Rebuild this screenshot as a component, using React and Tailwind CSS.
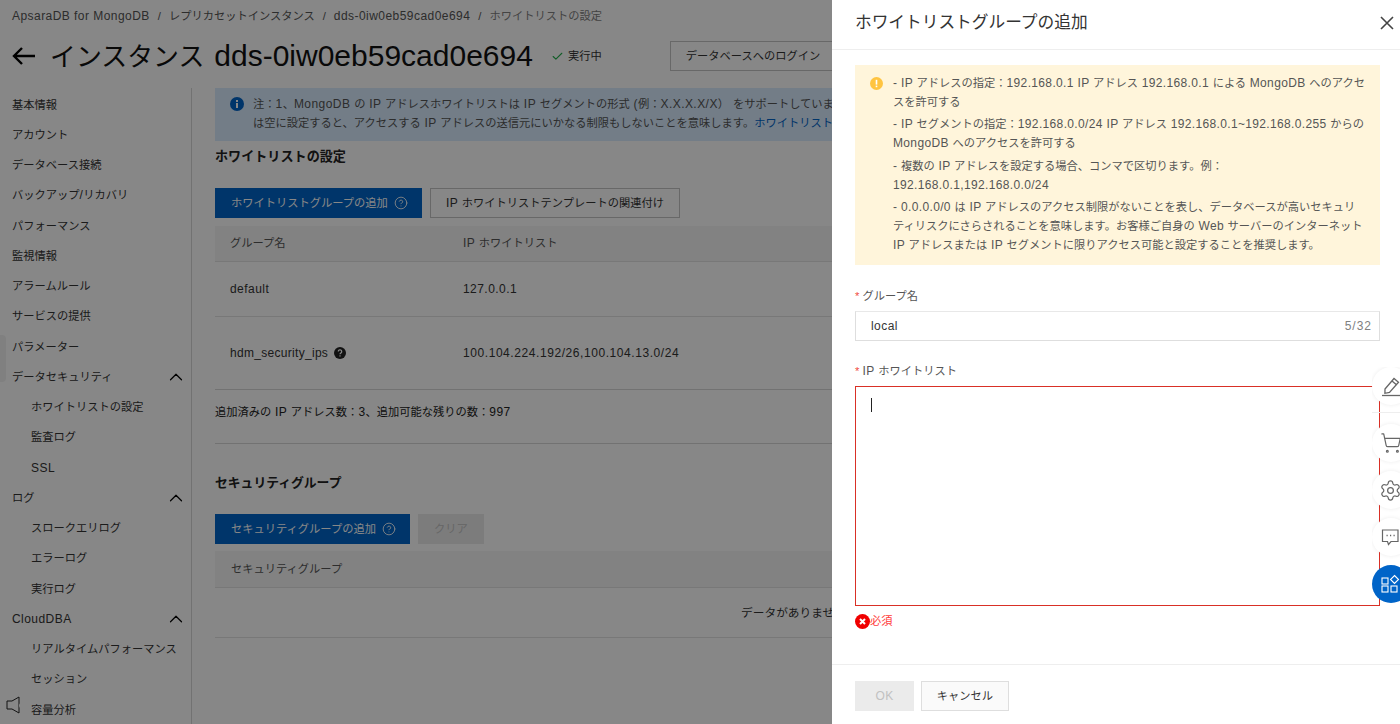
import React from "react";
import { ChevronUp, CircleHelp, ShoppingCart, Settings, Check } from "lucide-react";

const FONT = "font-['Liberation_Sans','Noto_Sans_CJK_JP',sans-serif]";

// latin runs sit a bit larger and wider than the kana around them
const T = ({ children, latin = "text-xs tracking-[0.45px]" }) => (
  <span className="whitespace-pre">
    {children.split(/([\x00-\x7f]+)/).map((part, i) =>
      i % 2 ? (
        <span key={i} className={latin}>{part}</span>
      ) : (
        part
      )
    )}
  </span>
);

const menu = [
  { label: "基本情報" },
  { label: "アカウント" },
  { label: "データベース接続" },
  { label: "バックアップ/リカバリ" },
  { label: "パフォーマンス" },
  { label: "監視情報" },
  { label: "アラームルール" },
  { label: "サービスの提供" },
  { label: "パラメーター" },
  { label: "データセキュリティ", open: true },
  { label: "ホワイトリストの設定", sub: true },
  { label: "監査ログ", sub: true },
  { label: "SSL", sub: true },
  { label: "ログ", open: true },
  { label: "スロークエリログ", sub: true },
  { label: "エラーログ", sub: true },
  { label: "実行ログ", sub: true },
  { label: "CloudDBA", open: true },
  { label: "リアルタイムパフォーマンス", sub: true },
  { label: "セッション", sub: true },
  { label: "容量分析", sub: true },
];

const alertText = [
  ["- IP アドレスの指定：192.168.0.1 IP アドレス 192.168.0.1 による MongoDB へのアクセ", "スを許可する"],
  ["- IP セグメントの指定：192.168.0.0/24 IP アドレス 192.168.0.1~192.168.0.255 からの", "MongoDB へのアクセスを許可する"],
  ["- 複数の IP アドレスを設定する場合、コンマで区切ります。例：", "192.168.0.1,192.168.0.0/24"],
  [
    "- 0.0.0.0/0 は IP アドレスのアクセス制限がないことを表し、データベースが高いセキュリ",
    "ティリスクにさらされることを意味します。お客様ご自身の Web サーバーのインターネット",
    "IP アドレスまたは IP セグメントに限りアクセス可能と設定することを推奨します。",
  ],
];

const Sidebar = () => (
  <div className="w-[192px] shrink-0 border-r border-[#d8d8d8] pt-[2px] relative">
    {menu.map((item) => (
      <div
        key={item.label}
        className={`h-[30.25px] flex items-center justify-between pr-[4px] text-[#333] ${item.sub ? "pl-[31px]" : "pl-3"}`}
      >
        <T>{item.label}</T>
        {item.open && <ChevronUp className="w-[22px] h-[22px] text-black" strokeWidth={1.3} />}
      </div>
    ))}
    <div className="absolute left-0 top-[247px] w-[6px] h-[47px] rounded-r bg-[#f2f2f2]" />
    <svg className="absolute left-[6px] top-[608px]" width="20" height="19" viewBox="0 0 20 19" fill="none">
      <path d="M1 5h5l7-4v16l-7-4H1z" stroke="#222" strokeWidth="1" />
      <circle cx="15.5" cy="9.5" r="2.5" fill="#fff" />
    </svg>
  </div>
);

const Content = () => (
  <div className="w-[1157px] ml-[23px] shrink-0 text-[#333]">
    <div className="h-[53px] bg-[#d9ecff] flex pl-[15px] pt-[7px] leading-[19px] text-[#555]">
      <svg className="mt-[2px] shrink-0" width="14" height="14" viewBox="0 0 14 14">
        <circle cx="7" cy="7" r="7" fill="#0064c8" />
        <rect x="6" y="6" width="2" height="5" fill="#fff" />
        <rect x="6" y="3" width="2" height="2" fill="#fff" />
      </svg>
      <div className="ml-[9px] flex flex-col">
        <T>注：1、MongoDB の IP アドレスホワイトリストは IP セグメントの形式 (例：X.X.X.X/X） をサポートしています</T>
        <div>
          <T>は空に設定すると、アクセスする IP アドレスの送信元にいかなる制限もしないことを意味します。</T>
          <span className="text-[#0064c8]">ホワイトリストの設定</span>
        </div>
      </div>
    </div>

    <h2 className="mt-[6px] h-[20px] leading-[20px] text-[13.1px] font-bold text-[#222]">ホワイトリストの設定</h2>

    <div className="mt-[21px] flex gap-2">
      <div className="h-[30px] w-[207px] bg-[#0064c8] text-white flex items-center pl-4 whitespace-nowrap">
        ホワイトリストグループの追加
        <CircleHelp className="w-3.5 h-3.5 ml-[6px]" strokeWidth={1.5} />
      </div>
      <div className="h-[30px] w-[250px] border border-[#c4c4c4] flex items-center justify-center">
        <T>IP ホワイトリストテンプレートの関連付け</T>
      </div>
    </div>

    <div className="mt-2 h-[36px] bg-[#f6f6f6] border-b border-[#e3e3e3] flex items-center text-[#555]">
      <span className="w-[248px] pl-[15px]">グループ名</span>
      <T>IP ホワイトリスト</T>
    </div>
    <div className="h-[55px] border-b border-[#e3e3e3] flex items-center">
      <span className="w-[248px] pl-[15px]"><T>default</T></span>
      <T>127.0.0.1</T>
    </div>
    <div className="h-[73px] border-b border-[#d8d8d8] flex items-center">
      <span className="w-[248px] pl-[15px] flex items-center">
        <T latin="text-xs tracking-[0.3px]">hdm_security_ips</T>
        <svg className="ml-[6px]" width="12" height="12" viewBox="0 0 12 12">
          <circle cx="6" cy="6" r="6" fill="#222" />
          <path d="M4.3 4.6a1.7 1.7 0 1 1 2.6 1.4c-.6.4-.9.7-.9 1.3" fill="none" stroke="#fff" strokeWidth="1.2" />
          <rect x="5.4" y="8.3" width="1.2" height="1.2" fill="#fff" />
        </svg>
      </span>
      <T latin="text-xs tracking-[0.57px]">100.104.224.192/26,100.104.13.0/24</T>
    </div>
    <div className="h-[54px] border-b border-[#d8d8d8] pt-[13px] leading-[18px] text-[#222]">
      <T>追加済みの IP アドレス数：3、追加可能な残りの数：997</T>
    </div>

    <h2 className="mt-[29px] h-[20px] leading-[20px] text-[12.8px] font-bold text-[#222]">セキュリティグループ</h2>

    <div className="mt-[21px] flex gap-2">
      <div className="h-[30px] w-[195px] bg-[#0064c8] text-white flex items-center pl-4 whitespace-nowrap">
        セキュリティグループの追加
        <CircleHelp className="w-3.5 h-3.5 ml-[6px]" strokeWidth={1.5} />
      </div>
      <div className="h-[30px] w-[66px] bg-[#ebebeb] text-[#c1c1c1] flex items-center justify-center">クリア</div>
    </div>

    <div className="mt-[7px] h-[37px] bg-[#f6f6f6] border-b border-[#e3e3e3] flex items-center pl-4 text-[#555]">
      セキュリティグループ
    </div>
    <div className="h-[50px] border-b border-[#e3e3e3] flex items-center justify-center text-[11.7px]">データがありません</div>
  </div>
);

const Drawer = () => (
  <div className="absolute top-0 right-0 bottom-0 w-[568px] bg-white flex flex-col text-[#555]">
    <div className="h-[50px] shrink-0 border-b border-[#eeeeee] flex items-center justify-between pb-[4px] pl-[23px] pr-[6px]">
      <span className="text-[16.7px] text-[#333]">ホワイトリストグループの追加</span>
      <svg width="14" height="14" viewBox="0 0 14 14" fill="none" stroke="#444" strokeWidth="1.6">
        <path d="M1 1l12 12M13 1L1 13" />
      </svg>
    </div>

    <div className="flex-1 pl-[23px] pr-[20px] pt-[15px]">
      <div className="h-[200px] bg-[#fff5db] flex pl-[15px] pt-[9px] leading-[19px]">
        <svg className="mt-[3px] shrink-0" width="13" height="13" viewBox="0 0 13 13">
          <circle cx="6.5" cy="6.5" r="6.5" fill="#ffc440" />
          <rect x="5.7" y="2.8" width="1.6" height="4.8" fill="#fff" />
          <rect x="5.7" y="8.6" width="1.6" height="1.6" fill="#fff" />
        </svg>
        <div className="ml-[10px] flex flex-col gap-[3.4px]">
          {alertText.map((para) => (
            <div key={para[0]} className="flex flex-col">
              {para.map((line) => (
                <T key={line} latin="text-xs tracking-[0.35px]">{line}</T>
              ))}
            </div>
          ))}
        </div>
      </div>

      <div className="mt-[22px] h-[18px] leading-[18px]">
        <span className="text-[#f04b3e]">*</span> <T>グループ名</T>
      </div>
      <div className="mt-[6px] h-[30px] border border-[#dedede] border-t-[#e8e8e8] flex items-center justify-between pl-[15px] pr-[7px] text-[#333]">
        <T>local</T>
        <span className="text-[#808080]"><T latin="text-xs tracking-[1px]">5/32</T></span>
      </div>

      <div className="mt-[21px] h-[18px] leading-[18px]">
        <span className="text-[#f04b3e]">*</span> <T>IP ホワイトリスト</T>
      </div>
      <div className="mt-[6px] h-[220px] border border-[#d93026] pl-[15px] pt-[11px]">
        <div className="w-px h-[14px] bg-[#222]" />
      </div>
      <div className="mt-[7px] h-[16px] flex items-center text-[#ff3b3b]">
        <svg className="shrink-0" width="15" height="15" viewBox="0 0 15 15">
          <circle cx="7.5" cy="7.5" r="7.5" fill="#f00000" />
          <path d="M5 5l5 5M10 5l-5 5" stroke="#fff" strokeWidth="2" />
        </svg>
        必須
      </div>
    </div>

    <div className="h-[60px] shrink-0 border-t border-[#eeeeee] flex gap-[7px] pl-[23px] pt-4">
      <div className="h-[30px] w-[59px] bg-[#ebebeb] text-[#c1c1c1] flex items-center justify-center"><T>OK</T></div>
      <div className="h-[30px] w-[88px] border border-[#dedede] bg-[#fafafa] text-[#333] flex items-center justify-center">キャンセル</div>
    </div>
  </div>
);

const FloatBtn = ({ className = "", blue, children }) => (
  <div
    className={`w-[38px] h-[38px] shrink-0 rounded-full flex items-center pl-[9px] ${blue ? "bg-[#0064c8] text-white" : "bg-white text-[#666] shadow-[0_0_4px_rgba(0,0,0,0.08)]"} ${className}`}
  >
    {children}
  </div>
);

const FloatBar = () => (
  <div className="absolute left-[1372px] top-[367px] w-[28px] overflow-hidden flex flex-col">
    <FloatBtn>
      <svg className="-ml-[1px]" width="22" height="22" viewBox="0 0 22 22" fill="none" stroke="#666" strokeWidth="1.3">
        <path d="M5 14L14 3.5l4.5 3.8-9 10.2-4.6.8z" />
        <path d="M12 6l4.5 3.8" />
        <path d="M2 20.5h18" />
      </svg>
    </FloatBtn>
    <div className="h-[8px] border-b border-[#eeeeee]" />
    <FloatBtn className="mt-[11px]">
      <ShoppingCart className="w-[22px] h-[22px] -ml-[1px]" strokeWidth={1.3} />
    </FloatBtn>
    <FloatBtn className="mt-[9px]">
      <Settings className="w-[23px] h-[23px] -ml-[2px]" strokeWidth={1.3} />
    </FloatBtn>
    <FloatBtn className="mt-[9px]">
      <svg width="18" height="18" viewBox="0 0 18 18" fill="none" stroke="#666" strokeWidth="1.2">
        <path d="M1.5 2h15.5v11.5h-7l-2.5 3-1-3H1.5z" />
        <path d="M5.5 7.5h1.2M9 7.5h1.2M12.5 7.5h1.2" strokeWidth="1.5" />
      </svg>
    </FloatBtn>
    <FloatBtn className="mt-[9px]" blue>
      <svg className="-ml-[1px]" width="20" height="20" viewBox="0 0 20 20" fill="none" stroke="#fff" strokeWidth="1.1">
        <rect x="2" y="4" width="6" height="6" />
        <path d="M14.5 1.5l4 4-4 4-4-4z" />
        <rect x="2" y="12" width="6" height="6" />
        <rect x="11" y="12" width="6" height="6" />
      </svg>
    </FloatBtn>
  </div>
);

export default function App() {
  return (
    <div className={`relative w-[1400px] h-[724px] overflow-hidden bg-white text-[11.25px] ${FONT}`}>
      <div className="h-[32px] pl-3 flex items-center gap-[8px] text-[#555]">
        <T>ApsaraDB for MongoDB</T>
        <span>/</span>
        <span>レプリカセットインスタンス</span>
        <span>/</span>
        <T>dds-0iw0eb59cad0e694</T>
        <span>/</span>
        <span className="text-[#808080]">ホワイトリストの設定</span>
      </div>

      <div className="h-[56px] flex items-center pl-3 pb-[8px] whitespace-nowrap">
        <svg width="23" height="18" viewBox="0 0 23 18" fill="none" stroke="#000" strokeWidth="2.4">
          <path d="M23 9H2M10 1L2 9l8 8" />
        </svg>
        <span className="ml-[15px] w-[484px] leading-[40px] text-[25.9px] text-[#111]">
          インスタンス<span className="ml-[10px] text-[30px]">dds-0iw0eb59cad0e694</span>
        </span>
        <Check className="ml-[17px] w-[13px] h-[13px] text-[#22b14c]" strokeWidth={2} />
        <span className="ml-[4px] text-[#333]">実行中</span>
        <div className="ml-[68px] h-[30px] w-[180px] shrink-0 border border-[#c4c4c4] flex items-center pl-[15px] text-[#333]">
          データベースへのログイン
        </div>
      </div>

      <div className="flex">
        <Sidebar />
        <Content />
      </div>

      <div className="absolute inset-0 bg-black/47" />
      <Drawer />
      <FloatBar />
    </div>
  );
}
